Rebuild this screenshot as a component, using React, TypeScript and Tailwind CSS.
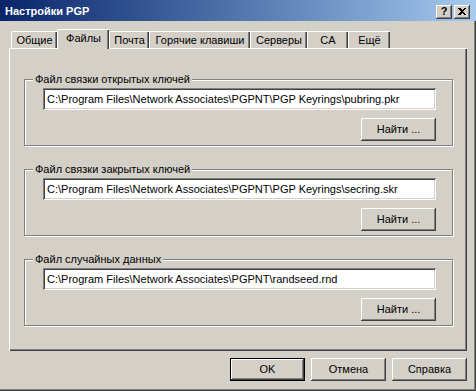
import React from 'react';

const raised =
  'shadow-[inset_-1px_-1px_0_#404040,inset_1px_1px_0_#ffffff,inset_-2px_-2px_0_#808080,inset_2px_2px_0_#d4d0c8]';
const sunken =
  'shadow-[inset_1px_1px_0_#808080,inset_-1px_-1px_0_#ffffff,inset_2px_2px_0_#404040,inset_-2px_-2px_0_#d4d0c8]';

const tabs = [
  { label: 'Общие', w: 'w-[46px]' },
  { label: 'Файлы', w: 'w-[52px]', active: true },
  { label: 'Почта', w: 'w-[40px]' },
  { label: 'Горячие клавиши', w: 'w-[101px]' },
  { label: 'Серверы', w: 'w-[57px]' },
  { label: 'CA', w: 'w-[41px]' },
  { label: 'Ещё', w: 'w-[42px]' },
];

const groups = [
  { title: 'Файл связки открытых ключей', path: 'C:\\Program Files\\Network Associates\\PGPNT\\PGP Keyrings\\pubring.pkr' },
  { title: 'Файл связки закрытых ключей', path: 'C:\\Program Files\\Network Associates\\PGPNT\\PGP Keyrings\\secring.skr' },
  { title: 'Файл случайных данных', path: 'C:\\Program Files\\Network Associates\\PGPNT\\randseed.rnd' },
];

const Button: React.FC<{ label: string; isDefault?: boolean }> = ({ label, isDefault }) =>
  isDefault ? (
    <div className="w-[75px] h-[23px] border border-black">
      <div className={`w-full h-full flex items-center justify-center bg-[#d4d0c8] ${raised}`}>{label}</div>
    </div>
  ) : (
    <div className={`w-[75px] h-[23px] flex items-center justify-center bg-[#d4d0c8] ${raised}`}>{label}</div>
  );

const App: React.FC = () => {
  return (
    <div className="w-[476px] h-[391px] bg-[#d4d0c8] text-black text-[11px] leading-[13px] font-['Liberation_Sans',Arial,sans-serif] shadow-[inset_-1px_-1px_0_#404040,inset_-2px_-2px_0_#808080] overflow-hidden">
      {/* title bar */}
      <div className="h-[21px] flex items-center pl-[5px] pr-[6px] bg-gradient-to-r from-[#0a246a] to-[#a6caf0]">
        <span className="flex-1 text-white font-bold pt-[1px]">Настройки PGP</span>
        <div className="flex gap-[2px] mt-[2px]">
          <div className={`w-[16px] h-[14px] bg-[#d4d0c8] flex items-center justify-center font-bold text-[11px] ${raised}`}>?</div>
          <div className={`w-[16px] h-[14px] bg-[#d4d0c8] flex items-center justify-center ${raised}`}>
            <svg width="8" height="7" viewBox="0 0 8 7" shapeRendering="crispEdges">
              <path d="M0 0H2L4 2L6 0H8L5 3.5L8 7H6L4 5L2 7H0L3 3.5Z" fill="#000" />
            </svg>
          </div>
        </div>
      </div>

      <div className="pl-[9px] pt-[8px]">
        {/* tabs */}
        <div className="flex items-end h-[19px] pl-[2px]">
          {tabs.map(t =>
            t.active ? (
              <div
                key={t.label}
                className={`${t.w} h-[20px] -mb-[1px] relative z-10 bg-[#d4d0c8] border-t border-l border-white rounded-tl-[2px] shadow-[inset_-1px_0_0_#404040,inset_-2px_0_0_#808080] flex items-center justify-center pb-[2px]`}
              >
                {t.label}
              </div>
            ) : (
              <div
                key={t.label}
                className={`${t.w} h-[17px] border-t border-l border-white rounded-tl-[2px] shadow-[inset_-1px_0_0_#404040,inset_-2px_0_0_#808080] flex items-center justify-center pt-[1px]`}
              >
                {t.label}
              </div>
            )
          )}
        </div>

        {/* panel */}
        <div className="w-[458px] h-[303px] border-t border-l border-white shadow-[inset_-1px_-1px_0_#404040,inset_-2px_-2px_0_#808080] pl-[14px] pt-[30px] flex flex-col gap-[23px]">
          {groups.map(g => (
            <div
              key={g.title}
              className="relative w-[429px] h-[67px] border border-[#808080] shadow-[inset_1px_1px_0_#ffffff,1px_1px_0_#ffffff] pl-[18px] pt-[8px]"
            >
              <span className="absolute -top-[7px] left-[8px] px-[2px] bg-[#d4d0c8]">{g.title}</span>
              <div className="w-[393px] flex flex-col items-end gap-[8px]">
                <div className={`w-full h-[22px] bg-white flex items-center pl-[4px] whitespace-nowrap ${sunken}`}>{g.path}</div>
                <Button label="Найти ..." />
              </div>
            </div>
          ))}
        </div>

        {/* buttons */}
        <div className="w-[458px] flex justify-end gap-[6px] mt-[7px]">
          <Button label="OK" isDefault />
          <Button label="Отмена" />
          <Button label="Справка" />
        </div>
      </div>
    </div>
  );
};

export default App;
